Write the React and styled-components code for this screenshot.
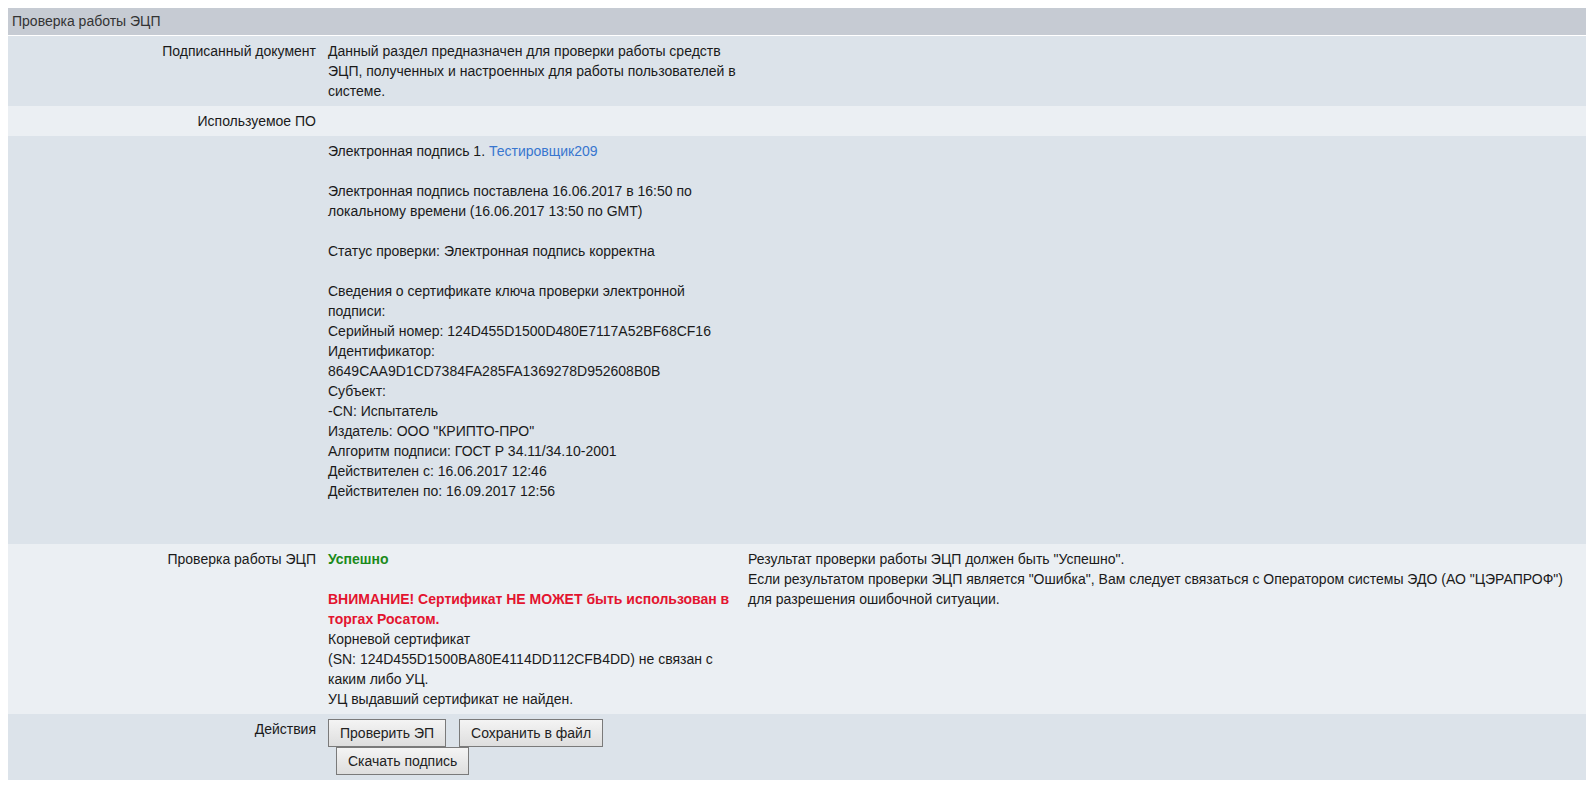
import React from "react";
import { styled, createGlobalStyle } from "styled-components";

const GlobalStyle = createGlobalStyle`
  body {
    margin: 8px;
    background: #ffffff;
    font-family: "Liberation Sans", Arial, sans-serif;
    font-size: 14px;
    color: #1a1a1a;
  }
`;

const Panel = styled.div`
  display: flex;
  flex-direction: column;
`;

const Header = styled.div`
  height: 27px;
  line-height: 27px;
  padding: 0 4px;
  background: #c6cbd3;
  color: #333333;
  border-bottom: 1px solid #ffffff;
`;

const Row = styled.div`
  display: grid;
  grid-template-columns: 314px 420px 1fr;
  background: ${(props) => (props.$light ? "#ebeff3" : "#dce3ea")};
  line-height: 20px;
`;

const Label = styled.div`
  padding: 5px 6px 5px 5px;
  text-align: right;
  white-space: nowrap;
`;

const Cell = styled.div`
  padding: 5px 5px 5px 6px;
  min-height: ${(props) => props.$minHeight || 0}px;
`;

const Note = styled.div`
  padding: 5px 8px 5px 6px;
`;

const Link = styled.a`
  color: #3876cf;
  text-decoration: none;
  cursor: pointer;
`;

const Success = styled.span`
  color: #1b8a1b;
  font-weight: bold;
`;

const Warning = styled.span`
  color: #e3142f;
  font-weight: bold;
`;

const Blank = styled.div`
  height: 20px;
`;

const ButtonLine = styled.div`
  display: flex;
  gap: 13px;
  padding-left: ${(props) => props.$indent || 0}px;
`;

const Button = styled.button`
  height: 28px;
  padding: 0 11px;
  font-family: "Liberation Sans", Arial, sans-serif;
  font-size: 14px;
  color: #222222;
  background: linear-gradient(#f4f4f4, #dedede);
  border: 1px solid #7a7a7a;
  border-radius: 0;
  cursor: pointer;
`;

export default function App() {
  return (
    <>
      <GlobalStyle />
      <Panel>
        <Header>Проверка работы ЭЦП</Header>

        <Row>
          <Label>Подписанный документ</Label>
          <Cell>
            Данный раздел предназначен для проверки работы средств ЭЦП,
            полученных и настроенных для работы пользователей в системе.
          </Cell>
          <Note />
        </Row>

        <Row $light>
          <Label>Используемое ПО</Label>
          <Cell />
          <Note />
        </Row>

        <Row>
          <Label />
          <Cell $minHeight={398}>
            <div>
              Электронная подпись 1. <Link>Тестировщик209</Link>
            </div>
            <Blank />
            <div>
              Электронная подпись поставлена 16.06.2017 в 16:50 по локальному
              времени (16.06.2017 13:50 по GMT)
            </div>
            <Blank />
            <div>Статус проверки: Электронная подпись корректна</div>
            <Blank />
            <div>Сведения о сертификате ключа проверки электронной подписи:</div>
            <div>Серийный номер: 124D455D1500D480E7117A52BF68CF16</div>
            <div>Идентификатор: 8649CAA9D1CD7384FA285FA1369278D952608B0B</div>
            <div>Субъект:</div>
            <div>-CN: Испытатель</div>
            <div>Издатель: ООО "КРИПТО-ПРО"</div>
            <div>Алгоритм подписи: ГОСТ Р 34.11/34.10-2001</div>
            <div>Действителен с: 16.06.2017 12:46</div>
            <div>Действителен по: 16.09.2017 12:56</div>
          </Cell>
          <Note />
        </Row>

        <Row $light>
          <Label>Проверка работы ЭЦП</Label>
          <Cell>
            <Success>Успешно</Success>
            <Blank />
            <div>
              <Warning>
                ВНИМАНИЕ! Сертификат НЕ МОЖЕТ быть использован в торгах Росатом.
              </Warning>
            </div>
            <div>
              Корневой сертификат
              <br />
              (SN: 124D455D1500BA80E4114DD112CFB4DD) не связан с каким либо УЦ.
            </div>
            <div>УЦ выдавший сертификат не найден.</div>
          </Cell>
          <Note>
            <div>Результат проверки работы ЭЦП должен быть "Успешно".</div>
            <div>
              Если результатом проверки ЭЦП является "Ошибка", Вам следует
              связаться с Оператором системы ЭДО (АО "ЦЭРАПРОФ") для разрешения
              ошибочной ситуации.
            </div>
          </Note>
        </Row>

        <Row>
          <Label>Действия</Label>
          <Cell>
            <ButtonLine>
              <Button>Проверить ЭП</Button>
              <Button>Сохранить в файл</Button>
            </ButtonLine>
            <ButtonLine $indent={8}>
              <Button>Скачать подпись</Button>
            </ButtonLine>
          </Cell>
          <Note />
        </Row>
      </Panel>
    </>
  );
}
